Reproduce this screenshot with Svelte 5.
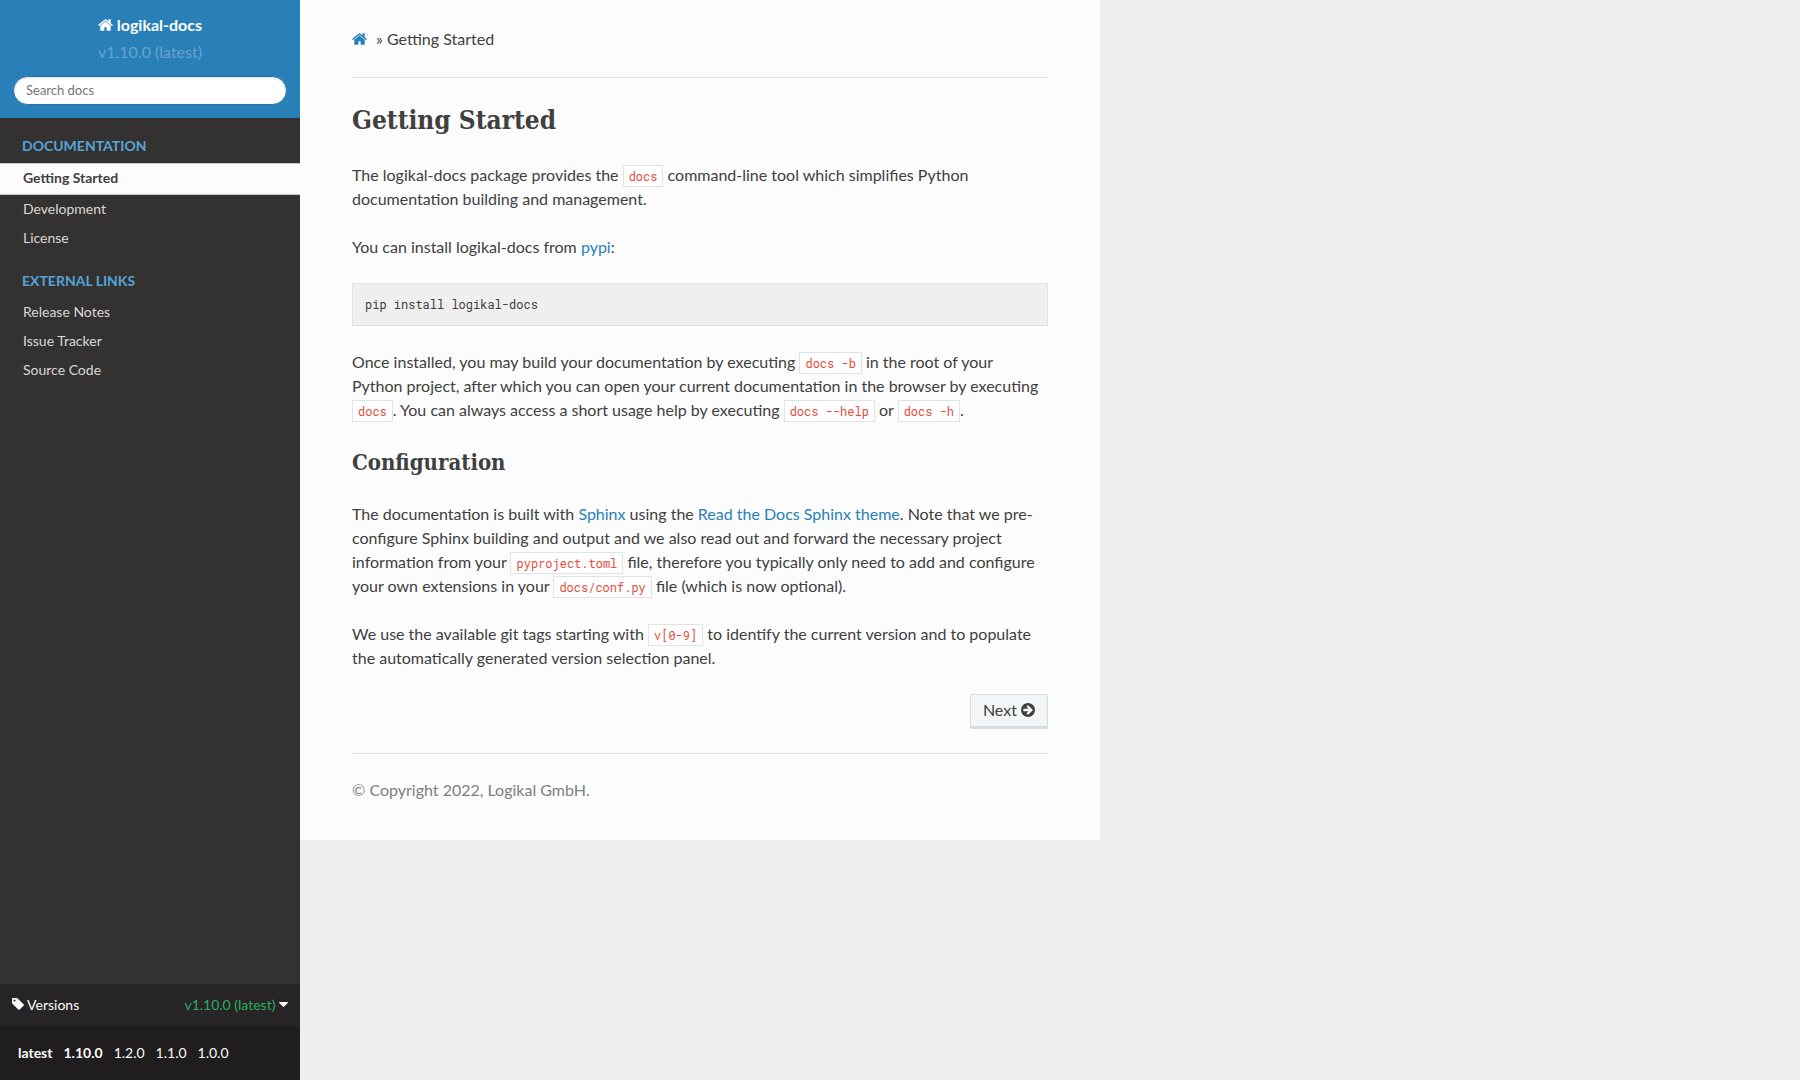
<script lang="ts">
  const docLinks = [
    { label: 'Getting Started', current: true },
    { label: 'Development', current: false },
    { label: 'License', current: false },
  ];
  const externalLinks = ['Release Notes', 'Issue Tracker', 'Source Code'];
  const versions = [
    { label: 'latest', current: true },
    { label: '1.10.0', current: true },
    { label: '1.2.0', current: false },
    { label: '1.1.0', current: false },
    { label: '1.0.0', current: false },
  ];
  let query = $state('');
  let showVersions = $state(true);
</script>

{#snippet homeIcon()}
  <svg class="icon home" viewBox="64 128 1664 1536" aria-hidden="true"><path d="M1472 992v480q0 26-19 45t-45 19h-384v-384h-256v384h-384q-26 0-45-19t-19-45v-480q0-1 .5-3t.5-3l575-474 575 474q1 2 1 6zm223-69l-62 74q-8 9-21 11h-3q-13 0-21-7l-692-577-692 577q-12 8-24 7-13-2-21-11l-62-74q-8-10-7-23.5t11-21.5l719-599q32-26 76-26t76 26l244 204v-195q0-14 9-23t23-9h192q14 0 23 9t9 23v408l219 182q10 8 11 21.5t-7 23.5z" /></svg>
{/snippet}

<div class="layout">
  <aside>
    <div class="brand">
      <a class="title" href="#home">{@render homeIcon()} logikal-docs</a>
      <div class="version">v1.10.0 (latest)</div>
      <form role="search" onsubmit={(e) => e.preventDefault()}>
        <input type="text" placeholder="Search docs" aria-label="Search docs" bind:value={query} />
      </form>
    </div>

    <nav aria-label="Documentation pages">
      <p class="caption">DOCUMENTATION</p>
      <ul>
        {#each docLinks as link}
          <li><a href="#page" class:current={link.current}>{link.label}</a></li>
        {/each}
      </ul>
      <p class="caption">EXTERNAL LINKS</p>
      <ul>
        {#each externalLinks as label}
          <li><a href="#external">{label}</a></li>
        {/each}
      </ul>
    </nav>

    <div class="versions">
      <button type="button" aria-expanded={showVersions} onclick={() => (showVersions = !showVersions)}>
        <span>
          <svg class="icon tag" viewBox="128 128 1536 1536" aria-hidden="true"><path d="M576 448q0-53-37.500-90.500t-90.500-37.500-90.500 37.500-37.500 90.500 37.500 90.500 90.500 37.500 90.500-37.500 37.500-90.500zm1067 576q0 53-37 90l-491 492q-39 37-91 37-53 0-90-37l-715-716q-38-37-64.500-101t-26.500-117v-416q0-52 38-90t90-38h416q53 0 117 26.500t102 64.500l715 714q37 39 37 91z" /></svg>
          Versions
        </span>
        <span class="selected">
          v1.10.0 (latest)
          <svg class="icon caret" viewBox="384 640 1024 576" aria-hidden="true"><path d="M1408 704q0 26-19 45l-448 448q-19 19-45 19t-45-19l-448-448q-19-19-19-45t19-45 45-19h896q26 0 45 19t19 45z" /></svg>
        </span>
      </button>
      {#if showVersions}
        <div class="version-list">
          {#each versions as v}
            <a href="#version" class:active={v.current}>{v.label}</a>
          {/each}
        </div>
      {/if}
    </div>
  </aside>

  <main>
    <div class="crumbs">
      <a href="#home" aria-label="Home">{@render homeIcon()}</a>
      <span>» Getting Started</span>
    </div>
    <hr />

    <h1>Getting Started</h1>
    <p>The logikal-docs package provides the <code>docs</code> command-line tool which simplifies Python documentation building and management.</p>
    <p>You can install logikal-docs from <a href="#pypi">pypi</a>:</p>
    <pre>pip install logikal-docs</pre>
    <p>Once installed, you may build your documentation by executing <code>docs -b</code> in the root of your Python&nbsp;project, after which you can open your current documentation in the browser by executing <code>docs</code>. You can always access a short usage help by executing <code>docs --help</code> or <code>docs -h</code>.</p>

    <h2>Configuration</h2>
    <p>The documentation is built with <a href="#sphinx">Sphinx</a> using the <a href="#theme">Read the Docs Sphinx theme</a>. Note that we pre-configure Sphinx building and output and we also read out and forward the necessary project information from your <code>pyproject.toml</code> file, therefore you typically only need to add and configure your own extensions in your <code>docs/conf.py</code> file (which is now optional).</p>
    <p>We use the available git tags starting with <code>v[0-9]</code> to identify the current version and to populate the automatically generated version selection panel.</p>

    <footer>
      <div class="pager">
        <a class="next" href="#next">Next <svg class="icon arrow" viewBox="128 128 1536 1536" aria-hidden="true"><path d="M1413 896q0-27-18-45l-91-91-362-362q-18-18-45-18t-45 18l-91 91q-18 18-18 45t18 45l189 189h-502q-26 0-45 19t-19 45v128q0 26 19 45t45 19h502l-189 189q-18 18-18 45t18 45l91 91q18 18 45 18t45-18l362-362 91-91q18-18 18-45zm251 0q0 209-103 385.500t-279.500 279.500-385.500 103-385.500-103-279.500-279.500-103-385.500 103-385.500 279.500-279.500 385.500-103 385.500 103 279.500 279.500 103 385.500z" /></svg></a>
      </div>
      <hr />
      <p class="copyright">© Copyright 2022, Logikal GmbH.</p>
    </footer>
  </main>
</div>

<style>
  :global(body) {
    margin: 0;
    background: #eee;
    color: #404040;
    font: 16px/24px Lato, 'Liberation Sans', sans-serif;
  }
  * { box-sizing: border-box; }
  a { color: #2980b9; text-decoration: none; }
  .icon { fill: currentColor; }
  .home { width: 15px; height: 14px; vertical-align: -1px; }
  .tag { width: 12px; height: 12px; }
  .caret { width: 9px; height: 5px; vertical-align: 3px; }
  .arrow { width: 14px; height: 14px; vertical-align: -1px; }

  .layout {
    display: grid;
    grid-template-columns: 300px minmax(0, 800px);
    align-items: start;
    min-height: 100vh;
  }

  aside {
    display: flex;
    flex-direction: column;
    min-height: 100vh;
    background: #343131;
  }
  .brand {
    display: flex;
    flex-direction: column;
    align-items: center;
    padding: 13px;
    background: #2980b9;
  }
  .title { color: #fcfcfc; font-weight: 700; }
  .version { margin: 3px 0 12px; color: rgba(255, 255, 255, 0.3); }
  form { width: 100%; }
  input {
    display: block;
    width: 100%;
    height: 29px;
    padding: 0 12px 2px;
    border: 1px solid #2472a4;
    border-radius: 50px;
    background: #fff;
    box-shadow: inset 0 1px 3px #ddd;
    color: #333;
    font: 13px/20px Lato, sans-serif;
  }
  input::placeholder { color: #757575; opacity: 1; }

  nav { flex: 1; }
  .caption {
    margin: 12px 0 0;
    padding: 0 22px 2px;
    color: #55a5d9;
    font-size: 14px;
    font-weight: 700;
    line-height: 31px;
  }
  ul { margin: 0; padding: 0; list-style: none; }
  li a {
    display: block;
    padding: 0 23px 2px;
    color: #d9d9d9;
    font-size: 14px;
    line-height: 27px;
  }
  li a.current {
    border: solid #c9c9c9;
    border-width: 1px 0;
    background: #fcfcfc;
    color: #404040;
    font-weight: 700;
    line-height: 28px;
  }

  .versions { background: #1f1d1d; font-size: 14px; }
  button {
    display: flex;
    justify-content: space-between;
    align-items: center;
    width: 100%;
    height: 42px;
    padding: 0 12px;
    border: 0;
    background: #272525;
    color: #fcfcfc;
    font: inherit;
  }
  .selected { color: #27ae60; }
  .caret { color: #fcfcfc; }
  .version-list { display: flex; gap: 11px; padding: 15px 18px; }
  .version-list a { color: #fcfcfc; }
  .version-list a.active { font-weight: 700; }

  main { padding: 27px 52px 38px; background: #fcfcfc; }
  .crumbs { display: flex; gap: 9px; }
  hr { height: 1px; margin: 26px 0 24px; border: 0; background: #e1e4e5; }
  h1, h2 {
    margin: 0 0 24px;
    font-family: 'Roboto Slab', 'DejaVu Serif Condensed', 'DejaVu Serif', serif;
    font-weight: 700;
  }
  h1 { font-size: 26px; line-height: 37px; }
  h2 { font-size: 22px; line-height: 32px; }
  p { margin: 0 0 24px; }
  code, pre {
    font-family: 'Roboto Mono', 'Liberation Mono', monospace;
    font-size: 12px;
  }
  code {
    padding: 2px 5px;
    border: 1px solid #e1e4e5;
    background: #fff;
    color: #e74c3c;
    line-height: 16px;
    white-space: nowrap;
  }
  pre {
    margin: 0 0 24px;
    padding: 12px;
    border: 1px solid #e1e4e5;
    background: #efefef;
    line-height: 17px;
    overflow-x: auto;
  }

  .pager { display: flex; justify-content: flex-end; }
  .next {
    padding: 5px 12px 8px;
    border: 1px solid rgba(0, 0, 0, 0.1);
    border-radius: 2px;
    background: #f3f6f6;
    box-shadow: inset 0 -2px 0 rgba(0, 0, 0, 0.1);
    color: #404040;
    line-height: 20px;
  }
  footer hr { margin: 24px 0; }
  .copyright { margin: 0; color: #808080; }
</style>
